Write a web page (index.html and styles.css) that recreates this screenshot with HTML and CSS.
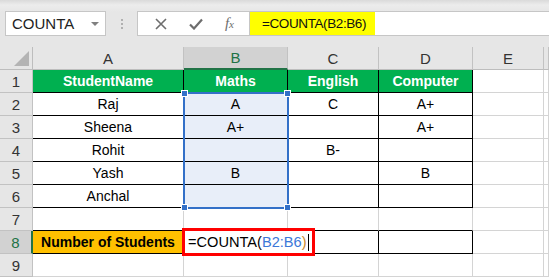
FILE: index.html
```html
<!DOCTYPE html>
<html lang="en">
    <head>
        <link rel="stylesheet" href="styles.css">
        <title>COUNTA</title>
    </head>

    <body>
        <!-- Name box and formula bar -->
        <div class="toolbar">
            <div class="namebox">
                <span>COUNTA</span>
                <span class="drop"></span>
            </div>
            <div class="grip"><i></i><i></i><i></i></div>
            <div class="fbar">
                <div class="fbtns">
                    <svg width="12" height="12" viewBox="0 0 12 12"><path d="M1 1L11 11M11 1L1 11" stroke="#6d6d6d" stroke-width="1.6" fill="none"/></svg>
                    <svg width="14" height="12" viewBox="0 0 14 12"><path d="M1 6.5L5 10.5L13 1.5" stroke="#6d6d6d" stroke-width="2.2" fill="none"/></svg>
                    <span class="fx">f<small>x</small></span>
                </div>
                <div class="finput"><span class="ftext">=COUNTA(B2:B6)</span></div>
            </div>
        </div>

        <!-- Sheet -->
        <div class="sheet">
            <div class="c corner"><span class="tri"></span></div>
            <div class="c ch">A</div>
            <div class="c ch on">B</div>
            <div class="c ch">C</div>
            <div class="c ch">D</div>
            <div class="c ch">E</div>
            <div class="c ch"></div>

            <div class="c rh">1</div>
            <div class="c t hd">StudentName</div>
            <div class="c t hd">Maths</div>
            <div class="c t hd">English</div>
            <div class="c t hd">Computer</div>
            <div class="c"></div>
            <div class="c"></div>

            <div class="c rh">2</div>
            <div class="c t">Raj</div>
            <div class="c t sel anchor">A
                <!-- range picked by the formula -->
                <div class="range">
                    <i class="h tl"></i><i class="h tr"></i>
                    <i class="h bl"></i><i class="h br"></i>
                </div>
            </div>
            <div class="c t">C</div>
            <div class="c t">A+</div>
            <div class="c"></div>
            <div class="c"></div>

            <div class="c rh">3</div>
            <div class="c t">Sheena</div>
            <div class="c t sel">A+</div>
            <div class="c t"></div>
            <div class="c t">A+</div>
            <div class="c"></div>
            <div class="c"></div>

            <div class="c rh">4</div>
            <div class="c t">Rohit</div>
            <div class="c t sel"></div>
            <div class="c t">B-</div>
            <div class="c t"></div>
            <div class="c"></div>
            <div class="c"></div>

            <div class="c rh">5</div>
            <div class="c t">Yash</div>
            <div class="c t sel">B</div>
            <div class="c t"></div>
            <div class="c t">B</div>
            <div class="c"></div>
            <div class="c"></div>

            <div class="c rh">6</div>
            <div class="c t">Anchal</div>
            <div class="c t sel"></div>
            <div class="c t"></div>
            <div class="c t"></div>
            <div class="c"></div>
            <div class="c"></div>

            <div class="c rh">7</div>
            <div class="c bb"></div>
            <div class="c bb"></div>
            <div class="c bb"></div>
            <div class="c bb"></div>
            <div class="c"></div>
            <div class="c"></div>

            <div class="c rh on">8</div>
            <div class="c t lbl">Number of Students</div>
            <div class="c t anchor">
                <!-- cell being edited -->
                <div class="edit">=COUNTA(<span class="ref">B2:B6</span><span class="par">)</span><span class="cursor"></span></div>
            </div>
            <div class="c t"></div>
            <div class="c t"></div>
            <div class="c"></div>
            <div class="c"></div>

            <div class="c rh">9</div>
            <div class="c"></div>
            <div class="c"></div>
            <div class="c"></div>
            <div class="c"></div>
            <div class="c"></div>
            <div class="c"></div>
        </div>
    </body>
</html>
```

FILE: styles.css
```css
* {
    box-sizing: border-box;
    margin: 0;
    padding: 0;
}
body {
    width: 549px;
    height: 278px;
    overflow: hidden;
    background: #fff;
    font-family: 'Liberation Sans', Arial, sans-serif;
    font-size: 14px;
    color: #000;
}

/* toolbar */
.toolbar {
    height: 47px;
    display: flex;
    align-items: flex-start;
    padding: 11px 0 0 5px;
    background: linear-gradient(#dadada 0, #ececec 5px, #e6e6e6 12px);
}
.namebox {
    width: 101px;
    height: 25px;
    background: #fff;
    border: 1px solid #c6c6c6;
    display: flex;
    align-items: center;
    justify-content: space-between;
    padding: 0 6px 0 6px;
    color: #222;
    font-size: 15px;
}
.namebox .drop {
    width: 0;
    height: 0;
    border-left: 4px solid transparent;
    border-right: 4px solid transparent;
    border-top: 4px solid #808080;
}
.grip {
    width: 31px;
    height: 25px;
    display: flex;
    flex-direction: column;
    align-items: center;
    justify-content: center;
    gap: 2px;
}
.grip i {
    width: 2px;
    height: 2px;
    background: #b0b0b0;
}
.fbar {
    flex: 1;
    height: 25px;
    display: flex;
}
.fbtns {
    width: 113px;
    height: 25px;
    background: #fff;
    border: 1px solid #c6c6c6;
    display: flex;
    align-items: center;
    justify-content: space-around;
    padding: 0 4px 0 6px;
}
.fx {
    font-family: 'Liberation Serif', serif;
    font-style: italic;
    font-size: 15px;
    color: #6d6d6d;
}
.fx small {
    font-size: 11px;
}
.finput {
    flex: 1;
    height: 25px;
    background: #fff;
    border-top: 1px solid #c6c6c6;
    border-bottom: 1px solid #c6c6c6;
}
.ftext {
    display: inline-block;
    width: 125px;
    height: 23px;
    line-height: 23px;
    padding-left: 12px;
    background: #ffff00;
    color: #111;
    font-size: 13.5px;
    letter-spacing: -0.4px;
}

/* sheet */
.sheet {
    display: grid;
    grid-template-columns: 33px 151px 104px 91px 94px 71px 1fr;
    grid-template-rows: repeat(10, 23px);
}
.c {
    display: flex;
    align-items: center;
    justify-content: center;
    border-right: 1px solid #d4d4d4;
    border-bottom: 1px solid #d4d4d4;
    white-space: nowrap;
}
.corner {
    background: #e6e6e6;
    border-right-color: #bdbdbd;
    border-bottom-color: #bdbdbd;
    justify-content: flex-end;
    align-items: flex-end;
    padding: 0 3px 3px 0;
}
.corner .tri {
    width: 0;
    height: 0;
    border-left: 15px solid transparent;
    border-bottom: 15px solid #b4b4b4;
}
.ch {
    background: #e6e6e6;
    color: #333;
    font-size: 15px;
    border-right-color: #c2c2c2;
    border-bottom-color: #bdbdbd;
}
.ch.on {
    background: #d2d2d2;
    color: #217346;
    border-bottom: 2px solid #217346;
}
.rh {
    background: #e6e6e6;
    color: #333;
    font-size: 15px;
    border-right-color: #c2c2c2;
    border-bottom-color: #c2c2c2;
}
.rh.on {
    background: #d2d2d2;
    color: #217346;
    border-right: 2px solid #217346;
}
.t {
    border-right-color: #000;
    border-bottom-color: #000;
}
.bb {
    border-bottom-color: #000;
}
.hd {
    background: #00b050;
    color: #fff;
    font-weight: bold;
}
.sel {
    background: #e8eef9;
    border-right-color: #d4d4d4;
}
.lbl {
    background: #ffc000;
    font-weight: bold;
}
.anchor {
    position: relative;
}

.range {
    position: absolute;
    left: -1px;
    top: -1px;
    width: 106px;
    height: 117px;
    border: 2px solid #3370c8;
    z-index: 2;
}
.range .h {
    position: absolute;
    width: 7px;
    height: 7px;
    background: #3370c8;
    border: 1px solid #fff;
}
.range .tl { left: -4px; top: -4px; }
.range .tr { right: -4px; top: -4px; }
.range .bl { left: -4px; bottom: -4px; }
.range .br { right: -4px; bottom: -4px; }

.edit {
    position: absolute;
    left: -2px;
    top: -3px;
    width: 133px;
    height: 28px;
    border: 3px solid #ff0000;
    background: #fff;
    display: flex;
    align-items: center;
    padding-left: 3px;
    white-space: nowrap;
    font-size: 14.6px;
    z-index: 3;
}
.edit .ref {
    color: #3c78d8;
}
.edit .par {
    color: #c8882a;
}
.edit .cursor {
    width: 1px;
    height: 17px;
    background: #000;
    margin-left: 1px;
}
```
